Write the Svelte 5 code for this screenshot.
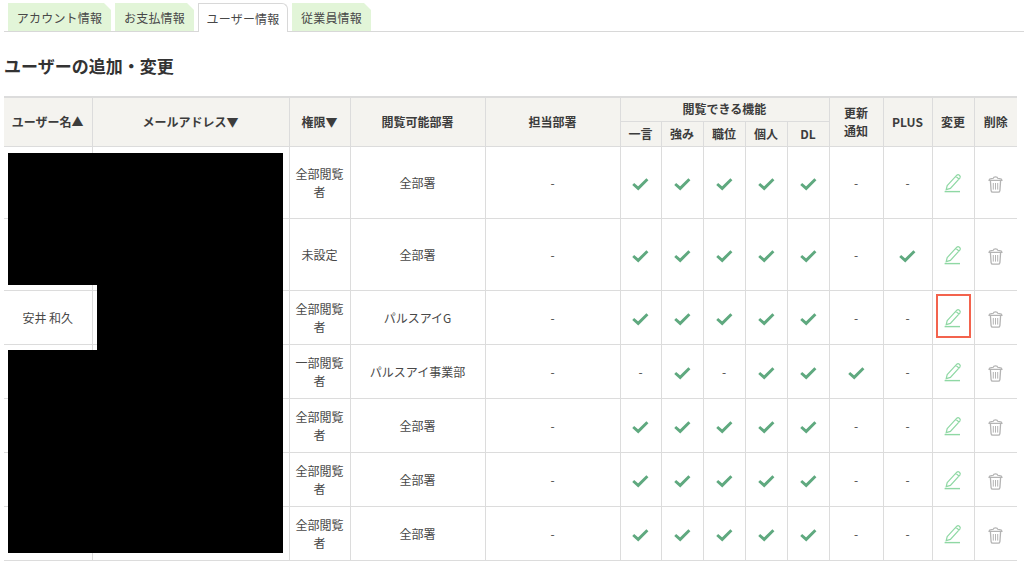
<script>
    const tabs = [
        { label: "アカウント情報" },
        { label: "お支払情報" },
        { label: "ユーザー情報", active: true },
        { label: "従業員情報" }
    ];

    const features = ["一言", "強み", "職位", "個人", "DL"];

    const rows = [
        { name: "", role: ["全部閲覧", "者"], dept: "全部署", on: [1, 1, 1, 1, 1], mail: 0, plus: 0, h: 72 },
        { name: "", role: ["未設定"], dept: "全部署", on: [1, 1, 1, 1, 1], mail: 0, plus: 1, h: 72 },
        { name: "安井 和久", role: ["全部閲覧", "者"], dept: "パルスアイG", on: [1, 1, 1, 1, 1], mail: 0, plus: 0, h: 54, selected: true },
        { name: "", role: ["一部閲覧", "者"], dept: "パルスアイ事業部", on: [0, 1, 0, 1, 1], mail: 1, plus: 0, h: 54 },
        { name: "", role: ["全部閲覧", "者"], dept: "全部署", on: [1, 1, 1, 1, 1], mail: 0, plus: 0, h: 54 },
        { name: "", role: ["全部閲覧", "者"], dept: "全部署", on: [1, 1, 1, 1, 1], mail: 0, plus: 0, h: 54 },
        { name: "", role: ["全部閲覧", "者"], dept: "全部署", on: [1, 1, 1, 1, 1], mail: 0, plus: 0, h: 54 }
    ];
</script>

{#snippet check()}
    <svg class="check" width="17" height="14" viewBox="0 0 17 14">
        <path d="M1.2 7 L6.2 11.4 L15.4 2.2" fill="none" stroke="#5fa97f" stroke-width="2.9" />
    </svg>
{/snippet}

{#snippet pen()}
    <svg width="18" height="20" viewBox="0 0 18 20">
        <path d="M3.2 12.6 L12.8 2.2 Q14 1.2 15.4 2.2 Q16.8 3.4 16 4.8 L6.4 15.4 L2.2 16.6 Z M11.8 3.4 L15 6" fill="none" stroke="#8fd8a4" stroke-width="1.2" />
        <path d="M0.6 18.6 H16" stroke="#8fd8a4" stroke-width="1.4" />
    </svg>
{/snippet}

{#snippet trash()}
    <svg width="15" height="17" viewBox="0 0 15 17">
        <path d="M1 4.4 Q1 2.8 3 2.6 L5.2 2.3 Q5.4 0.9 7.5 0.9 Q9.6 0.9 9.8 2.3 L12 2.6 Q14 2.8 14 4.4 Z" fill="none" stroke="#b4b4b4" stroke-width="1.2" />
        <path d="M2.4 4.6 L3.1 14.6 Q3.3 16.2 4.8 16.2 H10.2 Q11.7 16.2 11.9 14.6 L12.6 4.6" fill="none" stroke="#b4b4b4" stroke-width="1.3" />
        <path d="M5.3 7 V13.6 M7.5 7 V13.6 M9.7 7 V13.6" stroke="#b4b4b4" stroke-width="1" />
    </svg>
{/snippet}

<div class="page">
    <nav class="tabs">
        {#each tabs as tab}
            <span class="tab" class:active={tab.active}>{tab.label}</span>
        {/each}
    </nav>

    <h2>ユーザーの追加・変更</h2>

    <table>
        <colgroup>
            <col style="width:88px" />
            <col style="width:197px" />
            <col style="width:61px" />
            <col style="width:135px" />
            <col style="width:135px" />
            <col style="width:41px" />
            <col style="width:42px" />
            <col style="width:42px" />
            <col style="width:42px" />
            <col style="width:42px" />
            <col style="width:54px" />
            <col style="width:49px" />
            <col style="width:42px" />
            <col style="width:43px" />
        </colgroup>
        <thead>
            <tr class="head-a">
                <th rowspan="2">ユーザー名▲</th>
                <th rowspan="2">メールアドレス▼</th>
                <th rowspan="2">権限▼</th>
                <th rowspan="2">閲覧可能部署</th>
                <th rowspan="2">担当部署</th>
                <th colspan="5">閲覧できる機能</th>
                <th rowspan="2">更新<br />通知</th>
                <th rowspan="2">PLUS</th>
                <th rowspan="2">変更</th>
                <th rowspan="2">削除</th>
            </tr>
            <tr class="head-b">
                {#each features as f}
                    <th>{f}</th>
                {/each}
            </tr>
        </thead>
        <tbody>
            {#each rows as row}
                <tr style="height:{row.h}px">
                    <td>{row.name}</td>
                    <td></td>
                    <td class="role">{row.role[0]}{#if row.role[1]}<br />{row.role[1]}{/if}</td>
                    <td>{row.dept}</td>
                    <td>-</td>
                    {#each row.on as v}
                        <td>{#if v}{@render check()}{:else}-{/if}</td>
                    {/each}
                    <td>{#if row.mail}{@render check()}{:else}-{/if}</td>
                    <td>{#if row.plus}{@render check()}{:else}-{/if}</td>
                    <td class="icon">
                        <span class="edit" class:selected={row.selected}>{@render pen()}</span>
                    </td>
                    <td class="icon trash">{@render trash()}</td>
                </tr>
            {/each}
        </tbody>
    </table>

    <!-- redacted blocks sit over the table -->
    <div class="mask" style="left:8px;top:153px;width:275px;height:132px"></div>
    <div class="mask" style="left:97px;top:285px;width:186px;height:65px"></div>
    <div class="mask" style="left:8px;top:350px;width:275px;height:203px"></div>
</div>

<style>
    :global(body) {
        margin: 0;
        background: #fff;
    }

    .page {
        position: relative;
        width: 1024px;
        height: 568px;
        overflow: hidden;
        padding: 3px 0 0 4px;
        box-sizing: border-box;
        font-family: "Noto Sans CJK JP", "Noto Sans", sans-serif;
        color: #484848;
    }

    .tabs {
        display: flex;
        gap: 4px;
        height: 28px;
        padding-left: 4px;
        border-bottom: 1px solid #d8d8d8;
    }

    .tab {
        display: flex;
        align-items: center;
        justify-content: center;
        width: 103px;
        height: 28px;
        font-size: 12px;
        letter-spacing: 0.2px;
        background: #e2f5d8;
        clip-path: polygon(0 0, calc(100% - 7px) 0, 100% 7px, 100% 100%, 0 100%);
    }

    .tab:nth-child(2) {
        width: 79px;
    }

    .tab:nth-child(3) {
        width: 90px;
        height: 29px;
        background: #fff;
        border: 1px solid #d8d8d8;
        border-bottom: none;
        border-radius: 0 6px 0 0;
        box-sizing: border-box;
        clip-path: none;
    }

    .tab:nth-child(4) {
        width: 79px;
    }

    h2 {
        margin: 21px 0 18px;
        height: 25px;
        font-size: 17px;
        line-height: 25px;
        font-weight: 700;
        color: #333;
    }

    table {
        width: 1013px;
        table-layout: fixed;
        border-collapse: collapse;
        font-size: 12px;
        text-align: center;
    }

    th,
    td {
        padding: 0;
        border: 1px solid #dcdcdc;
    }

    table tr > :first-child {
        border-left: none;
    }

    table tr > :last-child {
        border-right: none;
    }

    thead tr:first-child th {
        border-top-width: 2px;
    }

    th {
        background: #f4f3ef;
        font-weight: 700;
        line-height: 18px;
        color: #3c3c3c;
    }

    .head-a {
        height: 24px;
    }

    .head-b {
        height: 25px;
    }

    .role {
        padding-top: 2px;
        line-height: 18px;
    }

    .check {
        display: block;
        margin: 4px auto 0;
    }

    .icon svg {
        display: block;
        margin: 0 auto;
    }

    .trash svg {
        margin-top: 5px;
    }

    .edit {
        display: block;
        width: 35px;
        height: 44px;
        margin: 0 auto 2px;
        padding-top: 12px;
        box-sizing: border-box;
        border: 2px solid transparent;
    }

    .edit.selected {
        border-color: #f3634d;
    }

    .mask {
        position: absolute;
        background: #000;
    }
</style>
